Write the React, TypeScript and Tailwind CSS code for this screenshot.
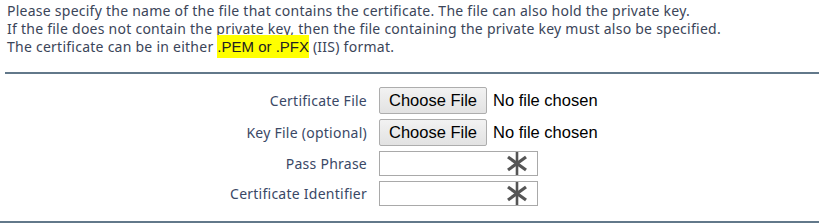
import React from 'react';

function Asterisk() {
  return (
    <svg
      className="absolute right-[9px] top-0 h-full w-[22px]"
      viewBox="0 0 22 23"
      preserveAspectRatio="none"
    >
      <line x1="11" y1="0" x2="11" y2="23" stroke="#555" strokeWidth="2.6" />
      <line x1="2" y1="5" x2="20" y2="18" stroke="#555" strokeWidth="3.2" />
      <line x1="20" y1="5" x2="2" y2="18" stroke="#555" strokeWidth="3.2" />
    </svg>
  );
}

function FileRow({ label }: { label: string }) {
  return (
    <div className="flex items-center h-[27px]">
      <div className="w-[367px] text-right text-[#3a4866]">{label}</div>
      <div className="ml-3 flex items-center font-['Liberation_Sans',Arial,sans-serif] text-[16.5px] tracking-normal text-black">
        <button className="h-[27px] w-[108px] border border-[#adadad] rounded-[2px] bg-gradient-to-b from-[#f2f2f2] to-[#e2e2e2]">
          Choose File
        </button>
        <span className="ml-[6px]">No file chosen</span>
      </div>
    </div>
  );
}

function TextRow({ label }: { label: string }) {
  return (
    <div className="flex items-center h-[25px]">
      <div className="w-[367px] text-right text-[#3a4866]">{label}</div>
      <div className="ml-3 relative h-[25px] w-[159px] border border-[#a9a9a9] bg-white">
        <Asterisk />
      </div>
    </div>
  );
}

export default function App() {
  return (
    <div className="w-[819px] h-[224px] bg-white pt-[2px] font-['Noto_Sans',sans-serif] text-[14px] tracking-[0.25px] text-[#3b4559] overflow-hidden">
      <div className="pl-[7px] leading-[18px]">
        <p>
          Please specify the name of the file that contains the certificate. The file can also hold the private key.
        </p>
        <p>
          If the file does not contain the private key, then the file containing the private key must also be specified.
        </p>
        <p>
          The certificate can be in either{' '}
          <span className="bg-[#ffff00] py-[3px] font-['Liberation_Sans',Arial,sans-serif] text-[15px] tracking-normal text-[#222]">
            .PEM or .PFX
          </span>{' '}
          (IIS) format.
        </p>
      </div>
      <div className="ml-[5px] mt-[16px] h-[2px] bg-[#62788a]" />
      <div className="mt-[13px] flex flex-col gap-[5px]">
        <FileRow label="Certificate File" />
        <FileRow label="Key File (optional)" />
        <TextRow label="Pass Phrase" />
        <TextRow label="Certificate Identifier" />
      </div>
      <div className="mt-[15px] h-[2px] bg-[#62788a]" />
    </div>
  );
}
